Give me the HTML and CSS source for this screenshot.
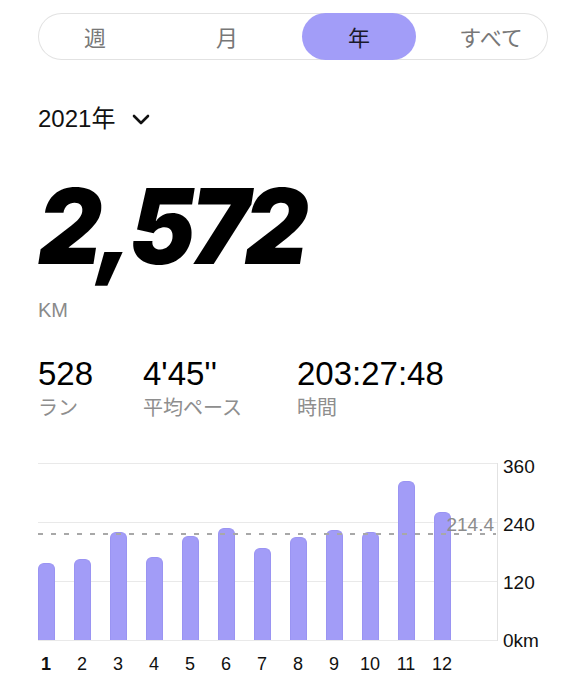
FILE: index.html
```html
<!DOCTYPE html>
<html lang="ja">
<head>
    <meta charset="UTF-8">
    <meta name="viewport" content="width=device-width, initial-scale=1.0">
    <title>アクティビティ</title>
    <link rel="stylesheet" href="styles.css">
</head>
<body>
    <main class="page">
        <!-- 期間の切り替え -->
        <nav class="segments">
            <span class="segment">週</span>
            <span class="segment">月</span>
            <span class="segment active">年</span>
            <span class="segment">すべて</span>
        </nav>

        <div class="year-picker">
            <span>2021年</span>
            <svg class="chevron" width="18" height="11" viewBox="0 0 18 11">
                <path d="M2 2 L9 9 L16 2" fill="none" stroke="#111" stroke-width="2.6" stroke-linecap="round" stroke-linejoin="round"/>
            </svg>
        </div>

        <div class="total">2,572</div>
        <div class="unit">KM</div>

        <section class="stats">
            <div class="stat">
                <div class="stat-value">528</div>
                <div class="stat-label">ラン</div>
            </div>
            <div class="stat">
                <div class="stat-value">4'45''</div>
                <div class="stat-label">平均ペース</div>
            </div>
            <div class="stat">
                <div class="stat-value">203:27:48</div>
                <div class="stat-label">時間</div>
            </div>
        </section>

        <section class="chart">
            <div class="plot">
                <div class="bar" style="height: 77px"></div>
                <div class="bar" style="height: 81px"></div>
                <div class="bar" style="height: 108px"></div>
                <div class="bar" style="height: 83px"></div>
                <div class="bar" style="height: 104px"></div>
                <div class="bar" style="height: 112px"></div>
                <div class="bar" style="height: 92px"></div>
                <div class="bar" style="height: 103px"></div>
                <div class="bar" style="height: 110px"></div>
                <div class="bar" style="height: 108px"></div>
                <div class="bar" style="height: 159px"></div>
                <div class="bar" style="height: 128px"></div>
                <div class="avg-line"></div>
                <div class="avg-label">214.4</div>
            </div>
            <div class="y-axis">
                <span>360</span>
                <span>240</span>
                <span>120</span>
                <span>0km</span>
            </div>
            <div class="months">
                <span class="current">1</span>
                <span>2</span>
                <span>3</span>
                <span>4</span>
                <span>5</span>
                <span>6</span>
                <span>7</span>
                <span>8</span>
                <span>9</span>
                <span>10</span>
                <span>11</span>
                <span>12</span>
            </div>
        </section>
    </main>
</body>
</html>
```

FILE: styles.css
```css
/* 基本 */
body {
    margin: 0;
    background: #fff;
    color: #111;
    font-family: "Liberation Sans", "Noto Sans CJK JP", sans-serif;
}

.page {
    padding: 13px 38px 0;
}

/* 期間の切り替え */
.segments {
    display: flex;
    justify-content: space-between;
    height: 47px;
    border-radius: 24px;
    box-shadow: inset 0 0 0 1px #e2e2e2;
}

.segment {
    width: 114px;
    line-height: 47px;
    text-align: center;
    font-size: 22px;
    color: #777;
    font-family: "Noto Sans CJK JP", sans-serif;
}

.segment.active {
    background-color: #a29df8;
    border-radius: 24px;
    color: #1a1a2a;
}

.year-picker {
    display: flex;
    align-items: center;
    margin-top: 45px;
    font-size: 24px;
    line-height: 28px;
}

.chevron {
    margin-left: 17px;
    margin-top: 1px;
}

/* 合計距離 */
.total {
    margin-top: 43px;
    font-family: Inter, "Liberation Sans", sans-serif;
    font-size: 104px;
    line-height: 100px;
    font-weight: 900;
    font-style: italic;
    letter-spacing: -5px;
    color: #000;
    transform: scaleX(0.95);
    transform-origin: left center;
}

.unit {
    margin-top: 22px;
    font-size: 20px;
    line-height: 24px;
    color: #8a8a8a;
}

/* 統計 */
.stats {
    display: grid;
    grid-template-columns: 105px 154px 1fr;
    margin-top: 34px;
}

.stat-value {
    font-size: 33px;
    line-height: 36px;
    color: #000;
}

.stat-label {
    margin-top: 4px;
    font-size: 20px;
    line-height: 24px;
    color: #8e8e8e;
}

/* グラフ */
.chart {
    display: grid;
    grid-template-columns: 460px auto;
    margin-top: 43px;
}

.plot {
    position: relative;
    display: flex;
    align-items: flex-end;
    gap: 19px;
    height: 178px;
    box-sizing: border-box;
    padding-bottom: 1px;
    border-right: 1px solid #e2e2e2;
    background-image: repeating-linear-gradient(to bottom, #e9e9e9 0 1px, transparent 1px 59px);
}

.bar {
    width: 17px;
    box-sizing: border-box;
    background-color: #a29cf7;
    border: 1px solid #9a94f2;
    border-bottom: none;
    border-radius: 6px 6px 0 0;
}

.avg-line {
    position: absolute;
    left: 0;
    top: 70px;
    width: 458px;
    height: 2px;
    background-image: repeating-linear-gradient(to right, #a8a8a8 0 5px, transparent 5px 13px);
}

.avg-label {
    position: absolute;
    right: 3px;
    top: 52px;
    font-size: 19px;
    line-height: 20px;
    color: #8c8c8c;
}

.y-axis {
    display: flex;
    flex-direction: column;
    gap: 38px;
    margin-top: -6px;
    padding-left: 5px;
    font-size: 19px;
    line-height: 20px;
}

.months {
    display: grid;
    grid-template-columns: repeat(12, 36px);
    margin-left: -10px;
    margin-top: 3px;
    font-size: 18px;
    line-height: 20px;
    text-align: center;
}

.months .current {
    font-weight: bold;
}
```
